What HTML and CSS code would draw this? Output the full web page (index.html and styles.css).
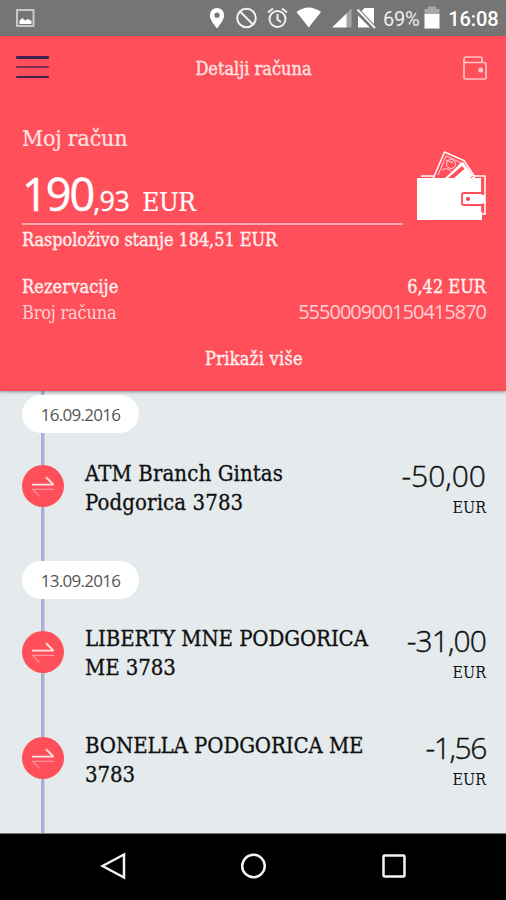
FILE: index.html
```html
<!DOCTYPE html>
<html lang="sr-Latn">
<head>
<meta charset="utf-8">
<title>Detalji računa</title>
<link rel="stylesheet" href="styles.css">
</head>
<body>
<svg class="defs" width="0" height="0" aria-hidden="true">
  <symbol id="transfer" viewBox="0 0 42 42">
    <circle cx="21" cy="21" r="21" fill="#ff4f5a"/>
    <path d="M10 19.6H31.5L24 12.3" fill="none" stroke="#ffe3e4" stroke-width="1.9" stroke-linejoin="bevel"/>
    <path d="M32 24.3H10.500L17.500 31.500" fill="none" stroke="#ff9298" stroke-width="1.3" stroke-linejoin="bevel"/>
  </symbol>
</svg>
<div class="status">
  <svg width="506" height="36" viewBox="0 0 506 36">
    <rect x="17" y="10" width="16.5" height="16" fill="none" stroke="#c9c9c9" stroke-width="2"/>
    <path d="M19.5 24V20.5L22.5 18L25 20.5L28 19L31.500 21V24Z" fill="#fff"/>
    <path fill="#fff" fill-rule="evenodd" d="M217 8a7.200 7.200 0 0 0-7.200 7.200C209.800 20.500 217 28.300 217 28.300S224.200 20.500 224.200 15.200A7.200 7.200 0 0 0 217 8Zm0 4.600a2.600 2.600 0 1 1 0 5.200a2.600 2.600 0 0 1 0-5.200Z"/>
    <g fill="none" stroke="#f2f2f2" stroke-width="2">
      <circle cx="246.500" cy="18" r="9.300"/><path d="M240 11.500L253 24.500"/>
      <circle cx="277.500" cy="19" r="8"/><path d="M277.500 14V19.500L281 22M268 12.500L273 8.500M287 12.500L282 8.500"/>
    </g>
    <path fill="#fff" d="M296.500 12Q308.500 3 321 12L308.700 27.500Z"/>
    <path fill="#a5a5a5" d="M351.500 8.500V27.500H346V14Z"/>
    <path fill="#fff" d="M332 27.500L346.500 13.500V27.500Z"/>
    <path fill="#fff" d="M361.500 11L364.500 8H374V24ZM358 15.500L370 27.500H358Z"/>
    <path stroke="#f2f2f2" stroke-width="2" d="M357.500 9.500L375 28"/>
    <path fill="#a9a9a9" d="M424.500 9H428V6.500H436V9H439.500V14H424.500Z"/>
    <path fill="#fff" d="M424.500 14H439.500V28.500H424.500Z"/>
  </svg>
  <span class="percent">69%</span>
  <span class="clock">16:08</span>
</div>
<header class="account">
  <div class="bar">
    <div class="menu"><i></i><i class="mid"></i><i></i></div>
    <h1>Detalji računa</h1>
    <svg class="bar-wallet" width="26" height="26" viewBox="0 0 26 26" fill="none" stroke="#ffc4c7" stroke-width="1.700">
      <path d="M2 5V22.500Q2 24 3.500 24H22.500Q24 24 24 22.500V9Q24 7.500 22.500 7.500H4Q2 7.500 2 5Q2 2 4 2H18.500Q20 2 20 3.500V7.500"/><circle cx="18.700" cy="15" r="1.700" fill="#ffd5d7"/>
    </svg>
  </div>
  <h2>Moj račun</h2>
  <div class="summary">
    <div class="balance"><span class="whole">190</span><span class="cents">,93</span><span class="cur">EUR</span></div>
    <svg class="wallet" width="72" height="72" viewBox="0 0 72 72">
      <path d="M17 29L28.500 2L48 10.500L59 27" fill="#ff4f5a" stroke="#fff" stroke-width="1.500"/>
      <path d="M22 25L30 6L44.500 12.500L35 27" fill="none" stroke="#ffd5d7" stroke-width="1"/>
      <path d="M30 10L37 13M26 20Q31 17 35 21" stroke="#ffd5d7" fill="none"/>
      <circle cx="35" cy="14" r="4.500" fill="none" stroke="#ffd5d7"/>
      <path d="M28 29L46.500 11.500L60 29Z" fill="#fff"/>
      <path d="M32 28L46 16L48.500 19L38 28Z" fill="#ff4f5a"/>
      <path d="M55 28Q57 24 60 28" fill="none" stroke="#ff4f5a"/>
      <path d="M5 26H18M57 26H69V64H65" fill="none" stroke="#fff" stroke-width="1.500"/>
      <rect x="1" y="28" width="65" height="42" rx="1" fill="#fff"/>
      <path d="M66 27V43H48Q46 43 46 45V53Q46 55 48 55H66V62" fill="none" stroke="#ff4f5a" stroke-width="1.800"/>
      <rect x="48" y="45" width="21" height="8.500" fill="#fff"/>
      <circle cx="52" cy="49" r="2" fill="#f23c4c"/>
    </svg>
  </div>
  <p class="available">Raspoloživo stanje 184,51 EUR</p>
  <div class="row strong"><span class="reserved">Rezervacije</span><span>6,42 EUR</span></div>
  <div class="row light"><span class="label">Broj računa</span><span class="number">555000900150415870</span></div>
  <div class="more">Prikaži više</div>
</header>
<main class="timeline">
  <div class="date">16.09.2016</div>
  <section class="tx last">
    <svg class="dot"><use href="#transfer"/></svg>
    <p class="name">ATM Branch Gintas<br>Podgorica 3783</p>
    <div class="amount"><b>-50,00</b><small>EUR</small></div>
  </section>
  <div class="date">13.09.2016</div>
  <section class="tx">
    <svg class="dot"><use href="#transfer"/></svg>
    <p class="name upper">LIBERTY MNE PODGORICA<br>ME 3783</p>
    <div class="amount"><b class="tight">-31,00</b><small>EUR</small></div>
  </section>
  <section class="tx">
    <svg class="dot"><use href="#transfer"/></svg>
    <p class="name upper">BONELLA PODGORICA ME<br>3783</p>
    <div class="amount"><b class="tighter">-1,56</b><small>EUR</small></div>
  </section>
</main>
<nav>
  <svg width="26" height="28" viewBox="0 0 26 28"><path d="M2.500 14L24 2.500V25.500Z"/></svg>
  <svg width="26" height="28" viewBox="0 0 26 28"><circle cx="13.500" cy="14" r="11.300"/></svg>
  <svg width="26" height="28" viewBox="0 0 26 28"><rect x="2.500" y="3.500" width="21" height="21" rx="1"/></svg>
</nav>
</body>
</html>
```
FILE: styles.css
```css
* { box-sizing: border-box; margin: 0; padding: 0; }
body {
  width: 506px; height: 900px; overflow: hidden;
  display: flex; flex-direction: column;
  background: #e5eaed; color: #111;
  font-family: "DejaVu Serif Condensed", "DejaVu Serif", serif;
  font-size: 18px; white-space: nowrap;
}
.defs { position: absolute; }
h1, h2 { font-weight: normal; }

.status {
  height: 36px; flex: none; position: relative;
  display: flex; align-items: center; justify-content: flex-end;
  padding: 2px 7.500px 0 0; background: #757575; color: #fff;
  font-family: Roboto, sans-serif;
}
.status svg { position: absolute; left: 0; top: 0; }
.percent { font-size: 20px; letter-spacing: -.3px; margin-right: 29px; color: #eee; }
.clock { font-size: 20px; font-weight: 500; letter-spacing: -.1px; }

.account {
  height: 355px; flex: none; padding: 0 20px 0 22px;
  background: #ff4f5a; color: #ffe3e4;
  position: relative;
  box-shadow: 0 1px 3px rgba(90, 90, 90, .6);
}
.bar { height: 66px; display: flex; align-items: center; justify-content: space-between; margin: 0 -3px 0 -6px; }
.menu { width: 33px; height: 22px; display: flex; flex-direction: column; justify-content: space-between; margin-top: -4px; }
.menu i { height: 2.500px; background: #40224d; border-radius: 1px; }
.menu .mid { background: #862f55; }
.bar h1 { font-size: 18px; margin: -2px 4px 0 0; -webkit-text-stroke: .35px; }
.bar-wallet { margin: -3px 1px 0 0; }
h2 { margin-top: 22px; height: 28px; line-height: 28px; font-size: 23px; letter-spacing: -.2px; -webkit-text-stroke: .2px; }
.summary { height: 72.500px; display: flex; justify-content: space-between; }
.balance {
  width: 381px; border-bottom: 2.500px solid #f3a8ad; color: #fff;
  display: flex; align-items: baseline; padding-top: 12px; height: 72.500px; line-height: 60px;
  font-family: "Open Sans", sans-serif;
}
.whole { font-size: 45px; letter-spacing: -2px; -webkit-text-stroke: .5px; }
.cents { font-size: 27px; letter-spacing: -.6px; -webkit-text-stroke: .3px; }
.cur { font-family: "DejaVu Serif Condensed", "DejaVu Serif", serif; font-size: 26px; letter-spacing: -.4px; margin-left: 13px; -webkit-text-stroke: .2px; }
.wallet { margin-right: -2px; margin-top: -2px; }
.available { height: 30px; line-height: 30px; margin-bottom: 19px; letter-spacing: -.08px; color: #fff0f0; -webkit-text-stroke: .35px; }
.row { height: 26px; line-height: 26px; display: flex; justify-content: space-between; }
.strong { color: #fff0f0; -webkit-text-stroke: .35px; }
.light { color: #ffd0d2; }
.label { letter-spacing: -.2px; }
.reserved { letter-spacing: .1px; }
.number { font-family: "Open Sans", sans-serif; font-size: 20px; letter-spacing: -1px; position: relative; top: -1px; }
.more { text-align: center; line-height: 26px; margin-top: 20px; letter-spacing: .3px; color: #fff0f0; -webkit-text-stroke: .35px; }

.timeline {
  height: 441.500px; flex: none; padding: 4px 20px 0 22px;
  background: linear-gradient(#a9aed6, #a9aed6) 41px 0 / 3.500px 100% no-repeat #e5eaed;
}
.date {
  width: 117px; height: 38px; border-radius: 19px; background: #fff;
  line-height: 39px; text-align: center; color: #555;
  font-family: "Open Sans", sans-serif; font-size: 17px; letter-spacing: -.7px;
}
.tx { height: 106.500px; padding-top: 25.500px; display: grid; grid-template-columns: 63px 1fr auto; align-items: start; }
.tx.last { height: 127.500px; }
.dot { width: 42px; height: 42px; margin-top: 6.500px; }
.name { font-size: 22px; line-height: 29px; letter-spacing: .1px; -webkit-text-stroke: .3px; }
.upper { letter-spacing: -.1px; }
.amount { text-align: right; margin-top: 1px; }
.amount b { display: block; font: 300 30px/32px "Open Sans", sans-serif; -webkit-text-stroke: .4px; }
.amount .tight { letter-spacing: -.9px; }
.amount .tighter { letter-spacing: -1.400px; }
.amount small { display: block; font-size: 16px; line-height: 32px; }

nav {
  height: 67.500px; flex: none; background: #000; border-top: 1px solid #777;
  display: flex; justify-content: center; gap: 114.500px; padding-top: 18.500px;
}
nav svg { fill: none; stroke: #f4f4f4; stroke-width: 2.500; }
```
